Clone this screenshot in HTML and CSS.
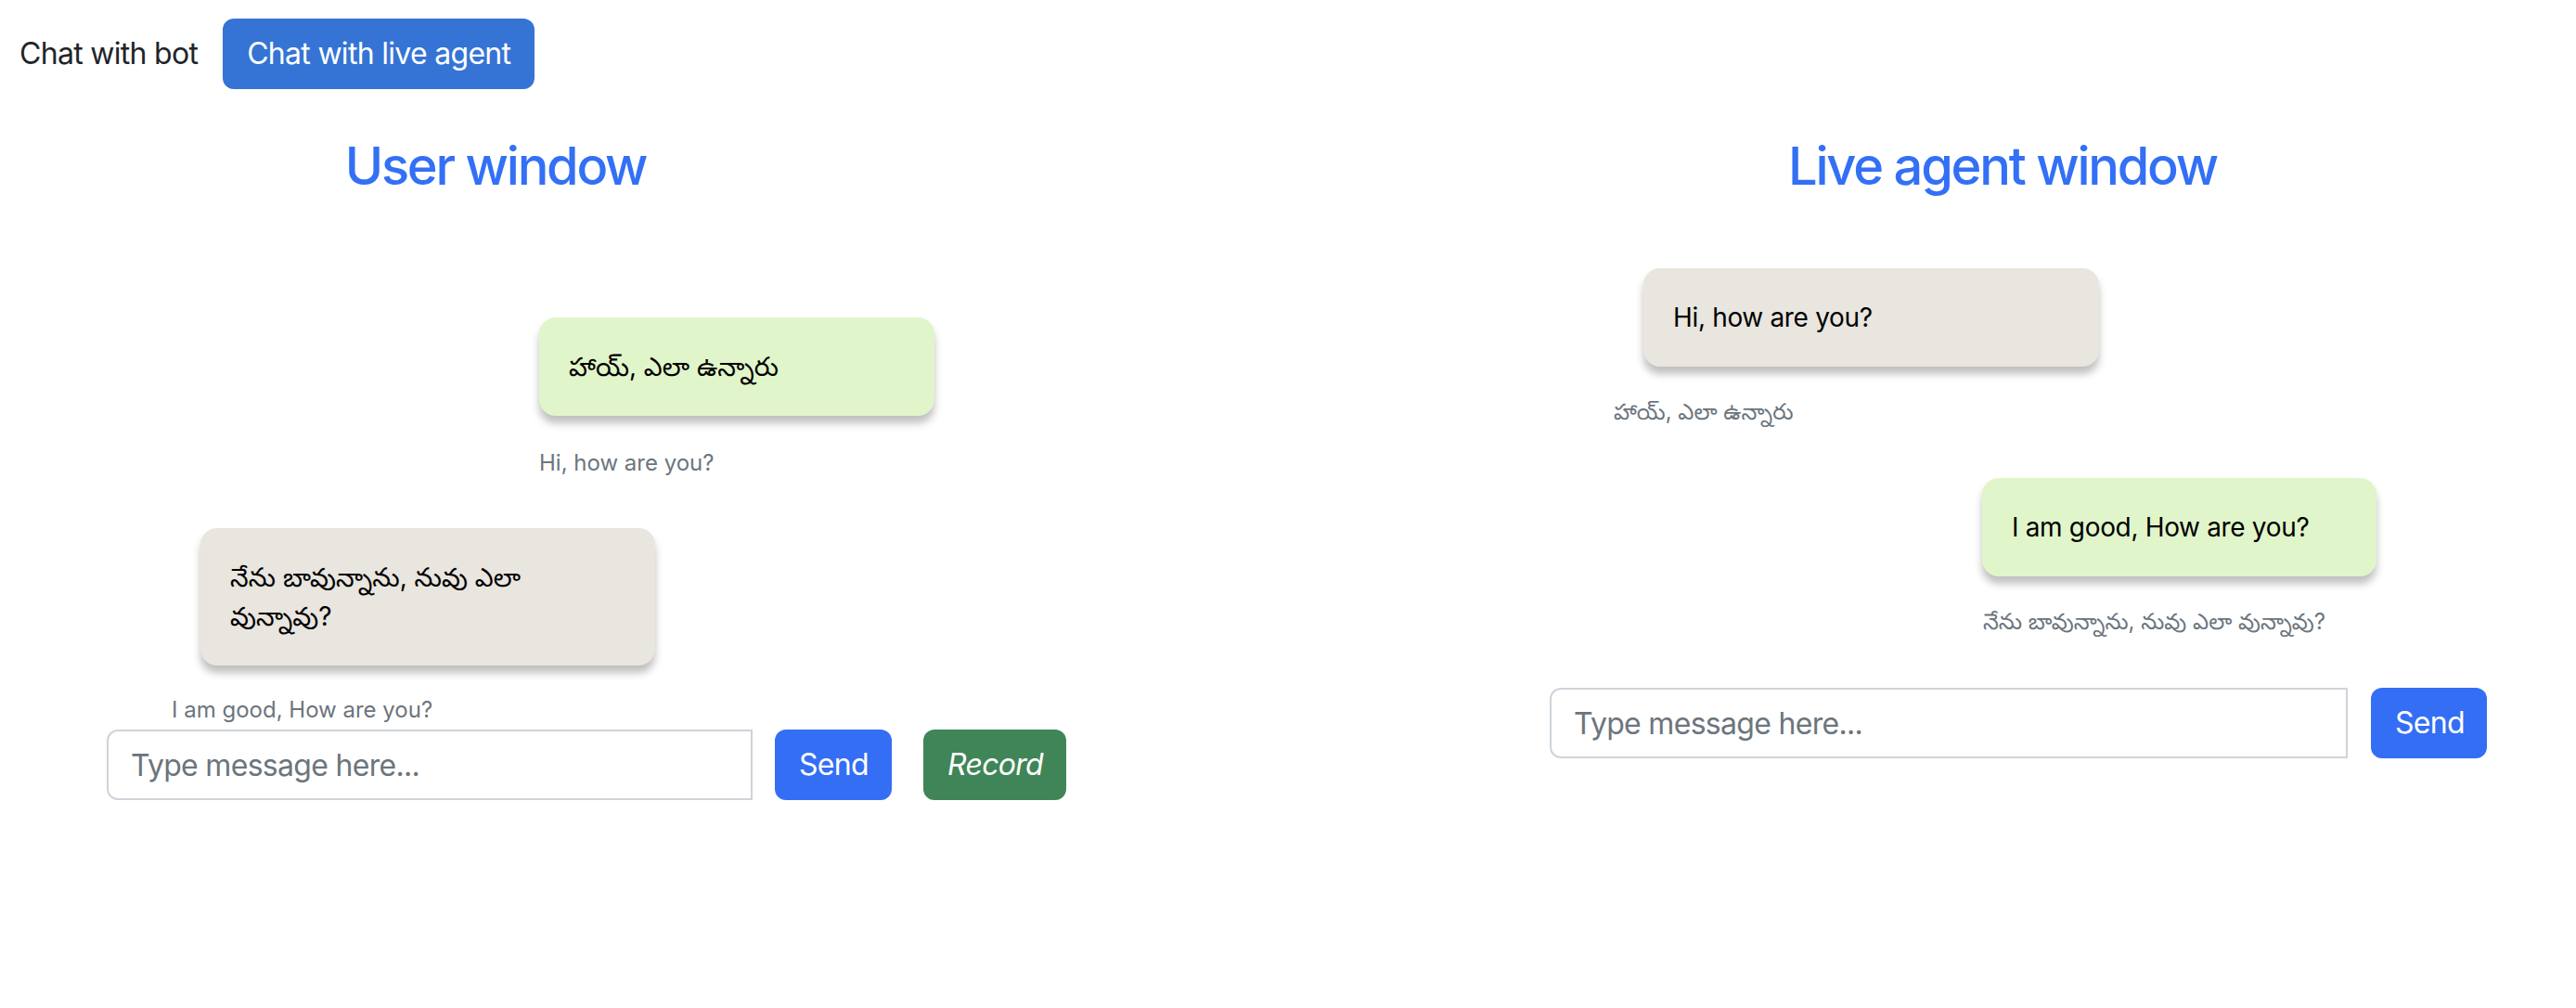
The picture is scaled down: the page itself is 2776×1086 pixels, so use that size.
FILE: index.html
```html
<!DOCTYPE html>
<html lang="en">
<head>
<meta charset="utf-8">
<title>Chat</title>
<link rel="stylesheet" href="styles.css">
</head>
<body>
<div class="topbar">
  <span class="tab">Chat with bot</span>
  <button class="btn btn-tab">Chat with live agent</button>
</div>
<div class="page">
  <section class="panel panel-user">
    <h3 class="title">User window</h3>
    <div class="messages messages-user">
      <div class="bubble bubble-sent bubble-u1 te" lang="te">హాయ్, ఎలా ఉన్నారు</div>
      <div class="sub sub-u1">Hi, how are you?</div>
      <div class="bubble bubble-recv bubble-u2 te" lang="te">నేను బావున్నాను, నువు ఎలా వున్నావు?</div>
      <div class="sub sub-u2">I am good, How are you?</div>
    </div>
    <div class="composer composer-user">
      <input class="field field-user" type="text" placeholder="Type message here...">
      <button class="btn btn-send">Send</button>
      <button class="btn btn-record"><i>Record</i></button>
    </div>
  </section>
  <section class="panel panel-agent">
    <h3 class="title">Live agent window</h3>
    <div class="messages messages-agent">
      <div class="bubble bubble-recv bubble-a1">Hi, how are you?</div>
      <div class="sub sub-a1 te" lang="te">హాయ్, ఎలా ఉన్నారు</div>
      <div class="bubble bubble-sent bubble-a2">I am good, How are you?</div>
      <div class="sub sub-a2 te" lang="te">నేను బావున్నాను, నువు ఎలా వున్నావు?</div>
    </div>
    <div class="composer composer-agent">
      <input class="field field-agent" type="text" placeholder="Type message here...">
      <button class="btn btn-send btn-send-agent">Send</button>
    </div>
  </section>
</div>
</body>
</html>
```
FILE: styles.css
```css
* { box-sizing: border-box; }
html, body { margin: 0; padding: 0; background: #ffffff; }
body {
  font-family: Inter, "Noto Sans Telugu", "Lohit Telugu", "Noto Sans", sans-serif;
  font-size: 32px;
  line-height: 1.5;
  color: #212529;
  letter-spacing: -0.022em;
}
.topbar {
  display: flex;
  align-items: center;
  padding: 20px 0 0 21px;
}
.tab { margin-right: 27px; color: #212529; }
.btn {
  flex-shrink: 0;
  font-family: inherit;
  font-size: 32px;
  line-height: 48px;
  letter-spacing: -0.022em;
  padding: 12px 24px;
  border: 2px solid transparent;
  border-radius: 12px;
  color: #ffffff;
  cursor: pointer;
  text-align: center;
}
.btn-tab { background: #3574d4; }
.page { display: flex; align-items: flex-start; }
.panel { flex-shrink: 0; }
.panel-user { width: 1068px; }
.panel-agent { width: 1236px; margin-left: 472px; }
.title {
  margin: 50px 0 0 0;
  font-size: 56px;
  font-weight: 500;
  line-height: 1.2;
  letter-spacing: -0.04em;
  color: #3370f5;
  text-align: center;
}
.messages { display: flex; flex-direction: column; align-items: flex-start; }
.messages-user { margin-top: 129px; }
.messages-agent { margin-top: 76px; }
.bubble {
  flex-shrink: 0;
  padding: 32px;
  font-size: 28px;
  line-height: 42px;
  letter-spacing: -0.012em;
  color: #000000;
  border-radius: 18px;
  box-shadow: 0 8px 8px rgba(0, 0, 0, 0.25);
}
.bubble-sent { background: #e1f5ca; width: 426px; }
.bubble-recv { background: #e9e5df; width: 491px; }
.sub {
  font-size: 24px;
  line-height: 36px;
  letter-spacing: 0;
  color: #6c757d;
  white-space: nowrap;
}
.te { letter-spacing: 0; }
.bubble-u1 { margin-left: 581px; }
.sub-u1 { margin: 33px 0 0 581px; }
.bubble-u2 { margin: 52px 0 0 216px; width: 490px; }
.sub-u2 { margin: 30px 0 0 185px; }
.bubble-a1 { margin-left: 231px; }
.sub-a1 { margin: 31px 0 0 199px; }
.bubble-a2 { margin: 53px 0 0 596px; width: 425px; }
.sub-a2 { margin: 31px 0 0 597px; }
.composer { display: flex; align-items: center; width: max-content; }
.composer-user { margin: 3px 0 0 115px; }
.composer-agent { margin: 53px 0 0 130px; }
.field {
  flex-shrink: 0;
  height: 76px;
  font-family: inherit;
  font-size: 32px;
  line-height: 48px;
  letter-spacing: -0.022em;
  padding: 12px 24px;
  border: 2px solid #ced4da;
  border-radius: 12px 0 0 12px;
  color: #212529;
  background: #ffffff;
  outline: none;
}
.field::placeholder { color: #6c757d; }
.field-user { width: 696px; }
.field-agent { width: 860px; }
.btn-send { background: #336ef5; width: 126px; margin-left: 24px; }
.btn-send-agent { width: 125px; margin-left: 25px; }
.btn-record { background: #408558; width: 154px; margin-left: 34px; }
```
